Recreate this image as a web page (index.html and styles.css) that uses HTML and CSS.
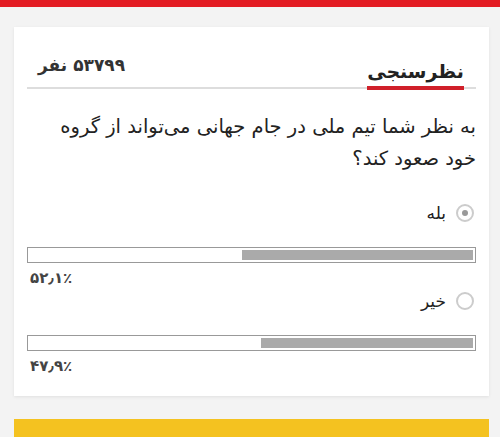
FILE: index.html
```html
<!DOCTYPE html>
<html lang="fa" dir="rtl">
  <head>
    <meta charset="UTF-8" />
    <meta name="viewport" content="width=device-width, initial-scale=1.0" />
    <title>نظرسنجی</title>
    <link rel="stylesheet" href="styles.css">
  </head>

  <body>
    <div class="topBar"></div>

    <div class="pollCard">
      <div class="pollHead">
        <h2 class="pollTitle">نظرسنجی</h2>
        <span class="pollCount">۵۳۷۹۹ نفر</span>
      </div>

      <p class="pollQuestion">به نظر شما تیم ملی در جام جهانی می‌تواند از گروه خود صعود کند؟</p>

      <div class="pollOption">
        <label class="optionLabel"><span class="radio checked"></span>بله</label>
        <div class="bar"><div class="barFill" style="width: 52.1%"></div></div>
        <div class="percent">۵۲٫۱٪</div>
      </div>

      <div class="pollOption">
        <label class="optionLabel"><span class="radio"></span>خیر</label>
        <div class="bar"><div class="barFill" style="width: 47.9%"></div></div>
        <div class="percent">۴۷٫۹٪</div>
      </div>
    </div>

    <div class="yellowBlock"></div>
  </body>
</html>
```

FILE: styles.css
```css
body {
  margin: 0;
  background-color: #f3f3f3;
  font-family: "DejaVu Sans", sans-serif;
  color: #222;
}

.topBar {
  height: 7px;
  background-color: #e31b23;
}

.pollCard {
  background-color: #fff;
  margin: 20px 11px 0 14px;
  padding: 0 13px 21px;
  box-shadow: 0 1px 3px rgba(0, 0, 0, 0.08);
}

.pollHead {
  display: flex;
  justify-content: space-between;
  align-items: flex-end;
  border-bottom: 2px solid #ddd;
  height: 60px;
}

.pollTitle {
  margin: 0 12px -3px 0;
  padding-bottom: 4px;
  font-size: 19px;
  font-weight: bold;
  border-bottom: 4px solid #d0202a;
}

.pollCount {
  margin: 0 0 12px 11px;
  font-size: 17px;
  font-weight: bold;
  color: #333;
}

.pollQuestion {
  margin: 22px 0 26px;
  font-size: 19.5px;
  line-height: 32px;
}

.pollOption + .pollOption {
  margin-top: 2px;
}

.optionLabel {
  display: flex;
  align-items: center;
  gap: 10px;
  font-size: 17px;
  padding-right: 2px;
  height: 24px;
}

.radio {
  width: 18px;
  height: 18px;
  border: 2px solid #ccc;
  border-radius: 50%;
  box-sizing: border-box;
  display: flex;
  align-items: center;
  justify-content: center;
}

.radio.checked::after {
  content: "";
  width: 6px;
  height: 6px;
  border-radius: 50%;
  background-color: #999;
}

.bar {
  margin-top: 22px;
  height: 16px;
  border: 1px solid #999;
  box-sizing: border-box;
  padding: 2px;
}

.barFill {
  height: 100%;
  background-color: #aaa;
}

.percent {
  direction: ltr;
  text-align: left;
  font-size: 15px;
  line-height: 18px;
  font-weight: bold;
  color: #444;
  padding-left: 3px;
  margin-top: 6px;
}

.yellowBlock {
  margin: 23px 11px 0 14px;
  height: 40px;
  background-color: #f4c220;
}
```
